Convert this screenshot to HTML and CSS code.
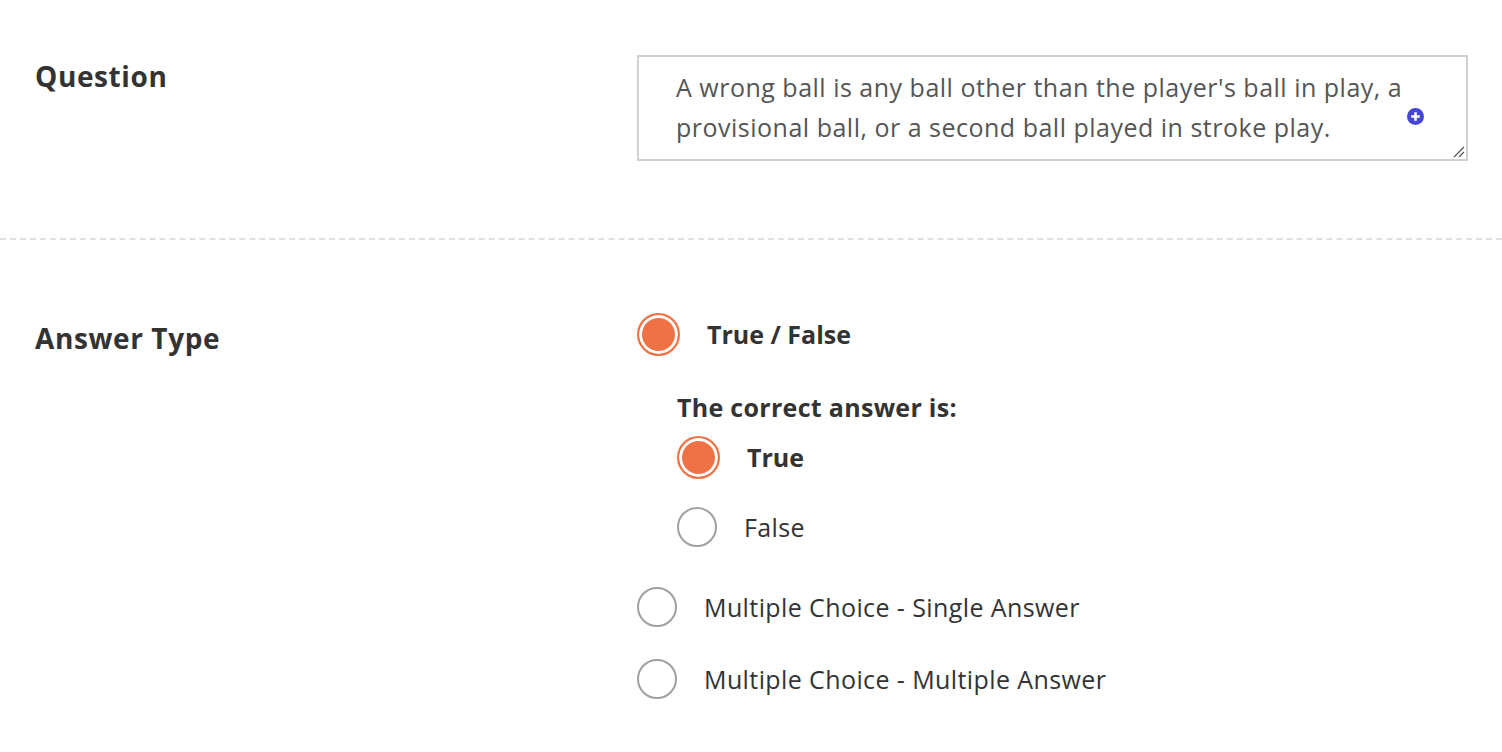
FILE: index.html
```html
<!DOCTYPE html>
<html lang="en">
<head>
    <meta charset="UTF-8">
    <title>Question editor</title>
    <link rel="stylesheet" href="styles.css">
</head>
<body>
<div id="editor">
    <div class="field-row question-row">
        <div class="field-label">Question</div>
        <div class="field-body">
            <div class="question-box">
                A wrong ball is any ball other than the player's ball in play, a provisional ball, or a second ball played in stroke play.
                <span class="add-icon">
                    <svg width="17" height="17" viewBox="0 0 16 16"><circle cx="8" cy="8" r="8" fill="#4545d6"/><path d="M8 4v8M4 8h8" stroke="#fff" stroke-width="2.4"/></svg>
                </span>
                <span class="grip">
                    <svg width="14" height="14" viewBox="0 0 14 14"><path d="M13 3L3 13M13 8L8 13" stroke="#555" stroke-width="1.2"/></svg>
                </span>
            </div>
        </div>
    </div>

    <div class="divider"></div>

    <div class="field-row answer-row">
        <div class="field-label">Answer Type</div>
        <div class="field-body">
            <div class="option selected bold">
                <span class="radio"></span>
                <span>True / False</span>
            </div>
            <div class="correct-answer">
                <div class="sub-title">The correct answer is:</div>
                <div class="option selected bold">
                    <span class="radio"></span>
                    <span>True</span>
                </div>
                <div class="option">
                    <span class="radio"></span>
                    <span>False</span>
                </div>
            </div>
            <div class="option">
                <span class="radio"></span>
                <span>Multiple Choice - Single Answer</span>
            </div>
            <div class="option">
                <span class="radio"></span>
                <span>Multiple Choice - Multiple Answer</span>
            </div>
        </div>
    </div>
</div>
</body>
</html>
```

FILE: styles.css
```css
body {
    font-family: "Open Sans", Lato, Arial, sans-serif;
    margin: 0;
    padding: 0;
    background-color: #fff;
    color: #333;
}

.field-row {
    display: grid;
    grid-template-columns: 637px 1fr;
}

.field-label {
    padding-left: 35px;
    font-size: 28px;
    font-weight: 700;
    letter-spacing: 0.6px;
    color: #333;
}

.question-row {
    padding-top: 55px;
}

.question-row .field-label {
    line-height: 42px;
}

.question-box {
    position: relative;
    width: 831px;
    height: 106px;
    box-sizing: border-box;
    border: 2px solid #d0d0d0;
    padding: 10px 60px 0 37px;
    font-size: 25px;
    letter-spacing: 0.5px;
    line-height: 40px;
    color: #555;
}

.add-icon {
    position: absolute;
    right: 42px;
    top: 51px;
    line-height: 0;
}

.grip {
    position: absolute;
    right: 1px;
    bottom: 1px;
    line-height: 0;
}

.divider {
    margin-top: 77px;
    border-top: 2px dashed #e0e0e0;
}

.answer-row {
    padding-top: 73px;
}

.answer-row .field-label {
    padding-top: 3px;
    line-height: 44px;
}

.option {
    display: flex;
    align-items: center;
    gap: 27px;
    height: 42px;
    font-size: 25px;
    letter-spacing: 0.4px;
    color: #333;
    margin-bottom: 30px;
}

.option.bold {
    font-weight: 700;
    letter-spacing: 0;
}

.radio {
    width: 40px;
    height: 40px;
    box-sizing: border-box;
    border-radius: 50%;
    border: 2px solid #a0a0a0;
    background: #fff;
    flex-shrink: 0;
}

.option.selected .radio {
    width: 43px;
    height: 43px;
    border: 2px solid #ee7245;
    background: #ee7245;
    box-shadow: inset 0 0 0 3px #fff;
}

.correct-answer {
    padding-left: 40px;
    padding-top: 4px;
}

.sub-title {
    font-size: 25px;
    font-weight: 700;
    letter-spacing: 0.3px;
    line-height: 36px;
    margin-bottom: 11px;
}

.correct-answer .option {
    margin-bottom: 28px;
}

.correct-answer .option:last-child {
    margin-bottom: 38px;
}
```
